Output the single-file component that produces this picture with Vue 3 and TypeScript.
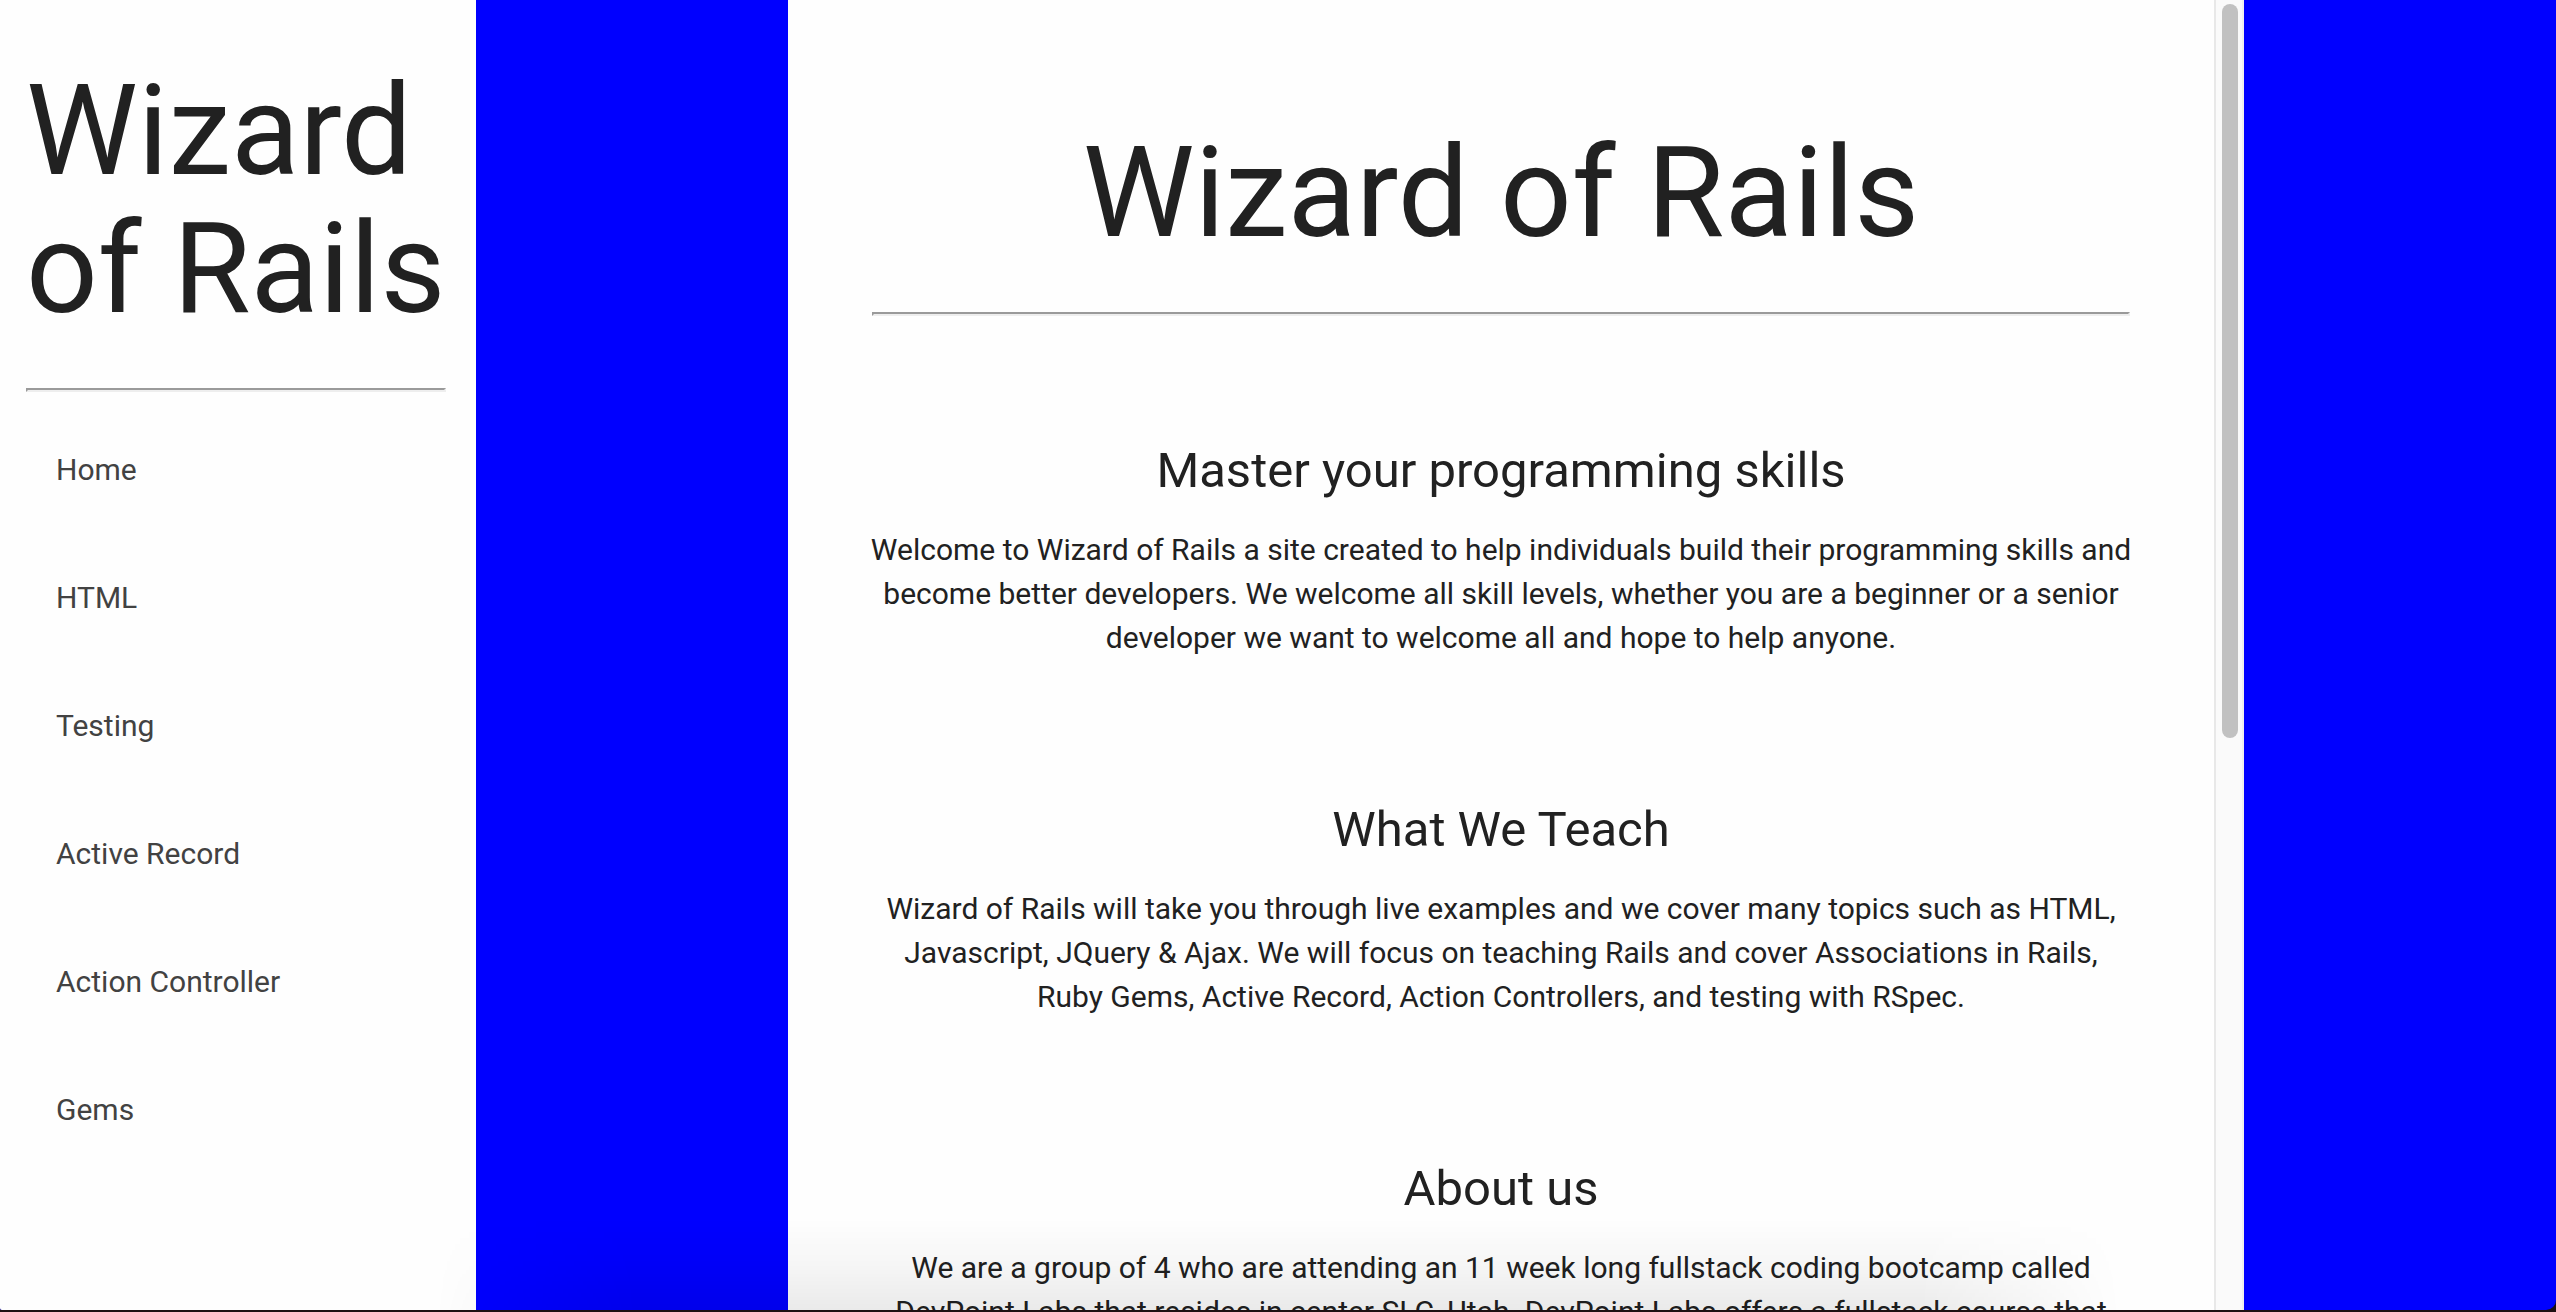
<script setup lang="ts">
interface Topic {
  heading: string
  body: string
}

const links: string[] = ['Home', 'HTML', 'Testing', 'Active Record', 'Action Controller', 'Gems']

const topics: Topic[] = [
  {
    heading: 'Master your programming skills',
    body: 'Welcome to Wizard of Rails a site created to help individuals build their programming skills and become better developers. We welcome all skill levels, whether you are a beginner or a senior developer we want to welcome all and hope to help anyone.',
  },
  {
    heading: 'What We Teach',
    body: 'Wizard of Rails will take you through live examples and we cover many topics such as HTML, Javascript, JQuery & Ajax. We will focus on teaching Rails and cover Associations in Rails, Ruby Gems, Active Record, Action Controllers, and testing with RSpec.',
  },
  {
    heading: 'About us',
    body: 'We are a group of 4 who are attending an 11 week long fullstack coding bootcamp called DevPoint Labs that resides in center SLC, Utah. DevPoint Labs offers a fullstack course that',
  },
]
</script>

<template>
  <div class="frame">
    <div class="page">
      <aside class="sidebar">
        <h1>Wizard of Rails</h1>
        <hr />
        <nav>
          <a v-for="link in links" :key="link" href="#">{{ link }}</a>
        </nav>
      </aside>
      <div class="stage">
        <main class="panel">
          <div class="content">
            <h1>Wizard of Rails</h1>
            <hr />
            <section v-for="topic in topics" :key="topic.heading">
              <h2>{{ topic.heading }}</h2>
              <p>{{ topic.body }}</p>
            </section>
          </div>
          <div class="track"><div class="thumb"></div></div>
        </main>
      </div>
      <div class="shade"></div>
    </div>
  </div>
</template>

<style>
body {
  margin: 0;
}
</style>

<style scoped>
.frame {
  box-sizing: border-box;
  height: 100vh;
  padding-bottom: 2px;
  overflow: hidden;
  background: #1c0f12;
  color: #212121;
  font-family: Roboto, sans-serif;
  font-size: 30px;
  line-height: 44px;
}

.page {
  position: relative;
  display: flex;
  height: 100%;
  overflow: hidden;
  border-radius: 0 0 10px 2px;
  background: #0000ff;
}

.sidebar {
  box-sizing: border-box;
  flex: none;
  width: 476px;
  padding: 62px 30px 0 26px;
  background: #fefefe;
}

h1 {
  margin: 0 0 50px;
  font-size: 126px;
  font-weight: 400;
  line-height: 138px;
}

hr {
  margin: 0;
  border: 2px solid;
  border-color: #9a9a9a #eeeeee #eeeeee #9a9a9a;
}

nav {
  display: flex;
  flex-direction: column;
  padding: 14px 30px 0;
}

nav a {
  color: #424242;
  line-height: 128px;
  text-decoration: none;
}

.stage {
  display: flex;
  flex: 1;
  justify-content: center;
  min-width: 0;
}

.panel {
  display: flex;
  width: 70%;
  overflow: hidden;
  background: #fefefe;
}

.content {
  flex: 1;
  min-width: 0;
  padding: 124px 84px 0;
  text-align: center;
}

section {
  padding: 127px 0 15px;
}

h2 {
  margin: 0 0 29px;
  font-size: 49px;
  font-weight: 400;
  line-height: 56px;
}

p {
  margin: 0 -4px;
}

.track {
  box-sizing: border-box;
  flex: none;
  width: 30px;
  padding: 4px 4px 0 6px;
  border-right: 2px solid #f0f0f0;
  border-left: 2px solid #e8e8e8;
  background: #fafafa;
}

.thumb {
  height: 56.2%;
  border-radius: 8px;
  background: #c1c1c1;
}

/* Soft shadow rising from the bottom edge of the window */
.shade {
  position: absolute;
  right: 17%;
  bottom: 0;
  left: 17%;
  height: 92px;
  background: linear-gradient(to top, rgba(0, 0, 0, 0.08), rgba(0, 0, 0, 0.03) 50%, transparent);
  mask-image: linear-gradient(to right, transparent, #000 12%, #000 88%, transparent);
  pointer-events: none;
}
</style>
